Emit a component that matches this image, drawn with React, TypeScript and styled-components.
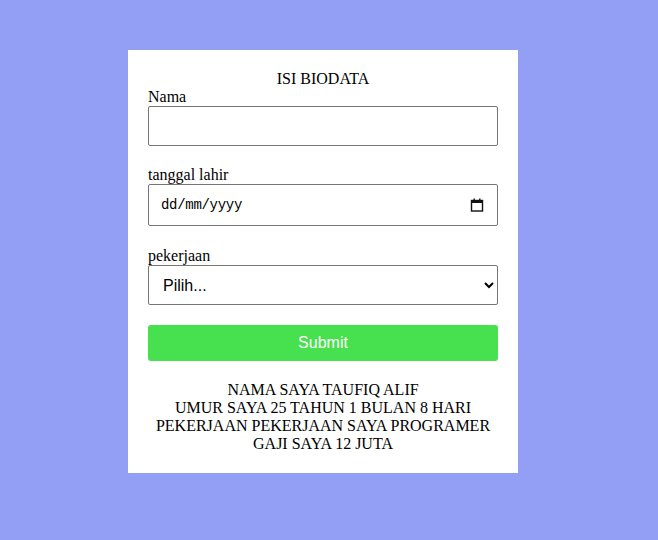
import React from "react";
import styled, { createGlobalStyle } from "styled-components";

const GlobalStyle = createGlobalStyle`
  html, body {
    margin: 0;
    padding: 0;
    background: #939ef5;
    font-family: "Liberation Serif", "Times New Roman", serif;
    font-size: 16px;
    color: #000;
  }
`;

const Page = styled.div`
  display: flex;
  justify-content: center;
  padding: 50px 12px 0 0;
`;

const Card = styled.form`
  width: 350px;
  background: #fff;
  padding: 20px;
  display: flex;
  flex-direction: column;
`;

const Title = styled.div`
  text-align: center;
`;

const Label = styled.label`
  display: block;
`;

const Field = styled.input`
  box-sizing: border-box;
  width: 100%;
  height: 40px;
  padding: 10px;
  margin: 0 0 20px;
  border: 1px solid #767676;
  border-radius: 2px;
  font-size: 16px;
  font-family: "Liberation Sans", Arial, sans-serif;
  background: #fff;
  color: #000;
  outline: none;
`;

const DateBox = styled.div`
  position: relative;
  margin: 0 0 21px;
`;

const DateField = styled(Field)`
  height: 42px;
  margin: 0;
  padding: 10px 40px 10px 12px;
  font-family: "Liberation Mono", "Courier New", monospace;
  font-size: 14px;
  letter-spacing: -0.3px;
  &::placeholder {
    color: #000;
    opacity: 1;
  }
`;

const CalendarIcon = styled.svg`
  position: absolute;
  right: 14px;
  top: 14px;
  width: 14px;
  height: 14px;
  pointer-events: none;
`;

const Select = styled.select`
  box-sizing: border-box;
  width: 100%;
  height: 40px;
  padding: 10px;
  margin: 0 0 20px;
  border: 1px solid #767676;
  border-radius: 2px;
  font-size: 16px;
  font-family: "Liberation Sans", Arial, sans-serif;
  background: #fff;
  color: #000;
`;

const Button = styled.button`
  width: 100%;
  height: 36px;
  border: none;
  border-radius: 3px;
  background: #47e04f;
  color: #fff;
  font-size: 16px;
  font-family: "Liberation Sans", Arial, sans-serif;
  cursor: pointer;
`;

const Result = styled.div`
  margin-top: 20px;
  text-align: center;
`;

export default function App() {
  return (
    <>
      <GlobalStyle />
      <Page>
        <Card onSubmit={(e) => e.preventDefault()}>
          <Title>ISI BIODATA</Title>
          <Label htmlFor="nama">Nama</Label>
          <Field id="nama" type="text" />
          <Label htmlFor="tgl">tanggal lahir</Label>
          <DateBox>
            <DateField id="tgl" type="text" placeholder="dd/mm/yyyy" />
            <CalendarIcon viewBox="0 0 14 14">
              <rect x="1.5" y="2.5" width="11" height="10.5" fill="none" stroke="#111" strokeWidth="1.4" />
              <rect x="1" y="2" width="12" height="3" fill="#111" />
              <rect x="3.5" y="0.5" width="1.4" height="2" fill="#111" />
              <rect x="9.1" y="0.5" width="1.4" height="2" fill="#111" />
            </CalendarIcon>
          </DateBox>
          <Label htmlFor="kerja">pekerjaan</Label>
          <Select id="kerja" defaultValue="">
            <option value="">Pilih...</option>
            <option value="programer">Programer</option>
          </Select>
          <Button type="submit">Submit</Button>
          <Result>
            NAMA SAYA TAUFIQ ALIF
            <br />
            UMUR SAYA 25 TAHUN 1 BULAN 8 HARI
            <br />
            PEKERJAAN PEKERJAAN SAYA PROGRAMER
            <br />
            GAJI SAYA 12 JUTA
          </Result>
        </Card>
      </Page>
    </>
  );
}
